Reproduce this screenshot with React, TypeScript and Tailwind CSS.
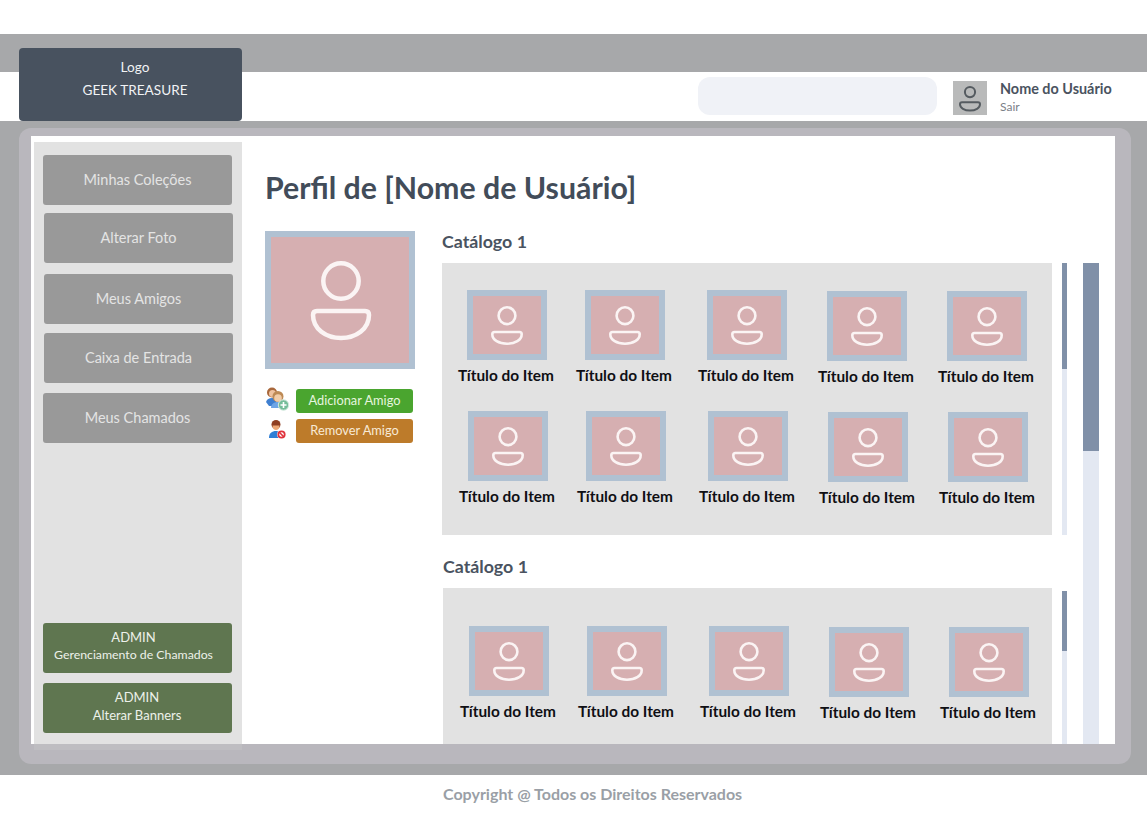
import React from 'react';

const font = "font-['Lato','Open_Sans',sans-serif]";

const BigUserIcon = () => (
  <svg viewBox="0 0 64 80" className="w-16 h-20 mt-px ml-px" fill="none" stroke="#fbf4f4" strokeWidth="4.500">
    <circle cx="32" cy="20" r="17.700" />
    <path d="M8 50H56Q60 50 60 54C60 68 47 77 32 77C17 77 4 68 4 54Q4 50 8 50Z" />
  </svg>
);

const SmallUserIcon = () => (
  <svg viewBox="0 0 32 39" className="w-8 h-[39px] mt-px" fill="none" stroke="#fbf4f4" strokeWidth="2.600">
    <circle cx="16" cy="9.700" r="8.400" />
    <path d="M3.500 26H28.500Q30.700 26 30.700 28.200C30.700 34 24 37.700 16 37.700C8 37.700 1.300 34 1.300 28.200Q1.300 26 3.500 26Z" />
  </svg>
);

const HeaderUserIcon = () => (
  <svg viewBox="0 0 22 26" className="w-[22px] h-[26px] mt-[2px]" fill="none" stroke="#555b60" strokeWidth="2">
    <circle cx="11" cy="6.100" r="5.100" />
    <path d="M3 16.300H19Q21 16.300 21 18.300C21 22 16.500 24.500 11 24.500C5.500 24.500 1 22 1 18.300Q1 16.300 3 16.300Z" />
  </svg>
);

const AddFriendsIcon = () => (
  <svg viewBox="0 0 24 24" className="w-6 h-6 mb-1">
    <path d="M0 15C1 12 3 11 6 11C9 11 11 13 11 19H3Z" fill="#3f7fd0" />
    <circle cx="6" cy="5.500" r="5" fill="#a9683c" />
    <circle cx="6.500" cy="6.500" r="3.500" fill="#eec29f" />
    <path d="M5 21C5 17 8 15 12 15C16 15 17 17 17 21Z" fill="#6ea5e6" />
    <circle cx="12" cy="9.500" r="5.500" fill="#bd8a55" />
    <circle cx="12" cy="11" r="3.800" fill="#f1cda9" />
    <circle cx="17.500" cy="18" r="5.200" fill="#76bd9a" stroke="#d5ebe0" strokeWidth="1" />
    <path d="M17.500 15V21M14.500 18H20.500" stroke="#fff" strokeWidth="1.600" />
  </svg>
);

const RemoveFriendIcon = () => (
  <svg viewBox="0 0 18 19" className="w-[18px] h-[19px] mb-1">
    <circle cx="8" cy="4.500" r="4.500" fill="#8f3f22" />
    <path d="M4.500 5.500H11.500C11.500 8.500 10 10 8 10C6 10 4.500 8.500 4.500 5.500Z" fill="#eda876" />
    <path d="M1 18C1 13 4 11 8 11C12 11 14 13 14 18Z" fill="#2f7fd6" />
    <circle cx="13.500" cy="14.500" r="4.500" fill="#fff" />
    <circle cx="13.500" cy="14.500" r="3.200" fill="none" stroke="#e0323c" strokeWidth="1.800" />
    <path d="M11.300 12.300L15.700 16.700" stroke="#e0323c" strokeWidth="1.600" />
  </svg>
);

const SideButton = ({ label, className }: { label: string; className: string }) => (
  <div className={`w-[189px] h-[50px] rounded-[3px] bg-[#999999] text-[#e4e4e4] text-[14.500px] flex items-center justify-center ${className}`}>
    {label}
  </div>
);

const AdminButton = ({ label, small, className }: { label: string; small?: boolean; className: string }) => (
  <div className={`ml-[9px] w-[189px] h-[50px] rounded-[3px] bg-[#5f7650] text-[#edf1ea] leading-[18px] flex flex-col items-center justify-center pb-1 ${className}`}>
    <span className="text-[13px]">ADMIN</span>
    <span className={small ? 'text-[12.300px]' : 'text-[13px]'}>{label}</span>
  </div>
);

const Item = ({ low }: { low?: boolean }) => (
  <div className={`w-20 flex flex-col items-center ${low ? 'mt-px' : ''}`}>
    <div className="w-20 h-[70px] shrink-0 border-[6px] border-[#b0c1d2] bg-[#d6afb1] flex items-center justify-center">
      <SmallUserIcon />
    </div>
    <div className="mt-[6px] mr-[2px] text-[15.400px] leading-[18px] font-bold text-[#0f0f14] whitespace-nowrap">Título do Item</div>
  </div>
);

const ItemRow = ({ className = '' }: { className?: string }) => (
  <div className={`grid grid-cols-[118px_122px_120px_120px_80px] h-[121px] ${className}`}>
    <Item />
    <Item />
    <Item />
    <Item low />
    <Item low />
  </div>
);

const SmallScroll = ({ className, thumb }: { className: string; thumb: string }) => (
  <div className={`w-[5px] bg-[#e3e8f2] ${className}`}>
    <div className={`bg-[#8090a8] ${thumb}`} />
  </div>
);

export default function App() {
  return (
    <div className={`${font} w-full h-[813px] bg-white overflow-hidden`}>
      <div className="h-[34px]" />
      <div className="h-[741px] bg-[#a7a8aa] relative">
        {/* Logo */}
        <div className="absolute left-[19px] top-[14px] w-[223px] h-[73px] rounded-[4px] bg-[#48525f] text-[#f1f3f5] text-[13.600px] leading-[23px] flex flex-col items-center pt-2 pl-[9px] z-10">
          <span>Logo</span>
          <span>GEEK TREASURE</span>
        </div>

        <div className="h-[38px]" />

        {/* Header */}
        <div className="h-[49px] bg-white flex items-center pl-[698px]">
          <div className="w-[239px] h-[38px] mt-[-1px] rounded-xl bg-[#f0f2f7]" />
          <div className="ml-4 w-[34px] h-[34px] mt-[3px] bg-[#b9baba] flex items-center justify-center">
            <HeaderUserIcon />
          </div>
          <div className="ml-[13px] mt-[2px] flex flex-col">
            <span className="text-[14.400px] leading-[18px] font-bold text-[#4a5360] whitespace-nowrap">Nome do Usuário</span>
            <span className="text-[12px] leading-[16px] mt-px text-[#7b8087]">Sair</span>
          </div>
        </div>

        {/* Body panel */}
        <div className="mt-[7px] ml-[19px] w-[1112px] h-[636px] rounded-xl bg-[#b9b7bd] pt-2 pl-3">
          <div className="w-[1084px] h-[608px] bg-white flex pl-[3px]">
            {/* Sidebar */}
            <div className="w-[208px] h-[608px] mt-[6px] shrink-0 flex flex-col">
              <div className="h-[602px] bg-[#e2e2e2] flex flex-col pt-[13px]">
                <SideButton label="Minhas Coleções" className="ml-[9px]" />
                <SideButton label="Alterar Foto" className="ml-[10px] mt-2" />
                <SideButton label="Meus Amigos" className="ml-[10px] mt-[11px]" />
                <SideButton label="Caixa de Entrada" className="ml-[10px] mt-[9px]" />
                <SideButton label="Meus Chamados" className="ml-[9px] mt-[10px]" />
                <AdminButton label="Gerenciamento de Chamados" small className="mt-[180px] pr-2" />
                <AdminButton label="Alterar Banners" className="mt-[10px] pr-px" />
              </div>
              <div className="h-[6px] bg-[#bebdc1]" />
            </div>

            {/* Main */}
            <div className="flex-1 h-[608px] pl-[23px] overflow-hidden">
              <h1 className="mt-[30px] text-[30.300px] leading-[42px] font-bold text-[#424c59] whitespace-nowrap">Perfil de [Nome de Usuário]</h1>
              <div className="mt-[23px] flex">
                {/* Profile column */}
                <div className="w-[150px] shrink-0">
                  <div className="w-[150px] h-[138px] border-[6px] border-[#b0c1d2] bg-[#d6afb1] flex items-center justify-center">
                    <BigUserIcon />
                  </div>
                  <div className="mt-5 h-6 flex items-center">
                    <div className="w-6 ml-px flex justify-center"><AddFriendsIcon /></div>
                    <div className="ml-[6px] w-[117px] h-6 rounded-[3px] bg-[#4aa52f] text-[#e6f5df] text-[12.800px] flex items-center justify-center">Adicionar Amigo</div>
                  </div>
                  <div className="mt-[6px] h-6 flex items-center">
                    <div className="w-6 flex justify-center"><RemoveFriendIcon /></div>
                    <div className="ml-[7px] w-[117px] h-6 rounded-[3px] bg-[#bd7b2a] text-[#f8ead6] text-[12.800px] flex items-center justify-center">Remover Amigo</div>
                  </div>
                </div>

                {/* Catalogs */}
                <div className="ml-[27px] w-[625px] shrink-0">
                  <div className="h-8 text-[17.800px] leading-[20px] font-bold text-[#4a5360]">Catálogo 1</div>
                  <div className="flex">
                    <div className="w-[610px] h-[272px] bg-[#e2e2e2] pt-[27px] pl-[25px]">
                      <ItemRow />
                      <ItemRow className="ml-px" />
                    </div>
                    <SmallScroll className="ml-[10px] h-[272px]" thumb="h-[106px]" />
                  </div>
                  <div className="ml-px mt-[21px] h-8 text-[17.800px] leading-[20px] font-bold text-[#4a5360]">Catálogo 1</div>
                  <div className="ml-px flex">
                    <div className="w-[609px] h-[200px] bg-[#e2e2e2] pt-[38px] pl-[26px]">
                      <ItemRow />
                    </div>
                    <SmallScroll className="ml-[10px] mt-[3px] h-[200px]" thumb="h-[60px]" />
                  </div>
                </div>

                {/* Page scrollbar */}
                <div className="ml-4 mt-8 w-4 h-[600px] shrink-0 bg-[#e3e8f2]">
                  <div className="h-[188px] bg-[#8090a8]" />
                </div>
              </div>
            </div>
          </div>
        </div>
      </div>

      {/* Footer */}
      <div className="h-[38px] flex items-center pl-[443px] text-[16px] font-bold text-[#9a9fa6]">
        Copyright @ Todos os Direitos Reservados
      </div>
    </div>
  );
}
